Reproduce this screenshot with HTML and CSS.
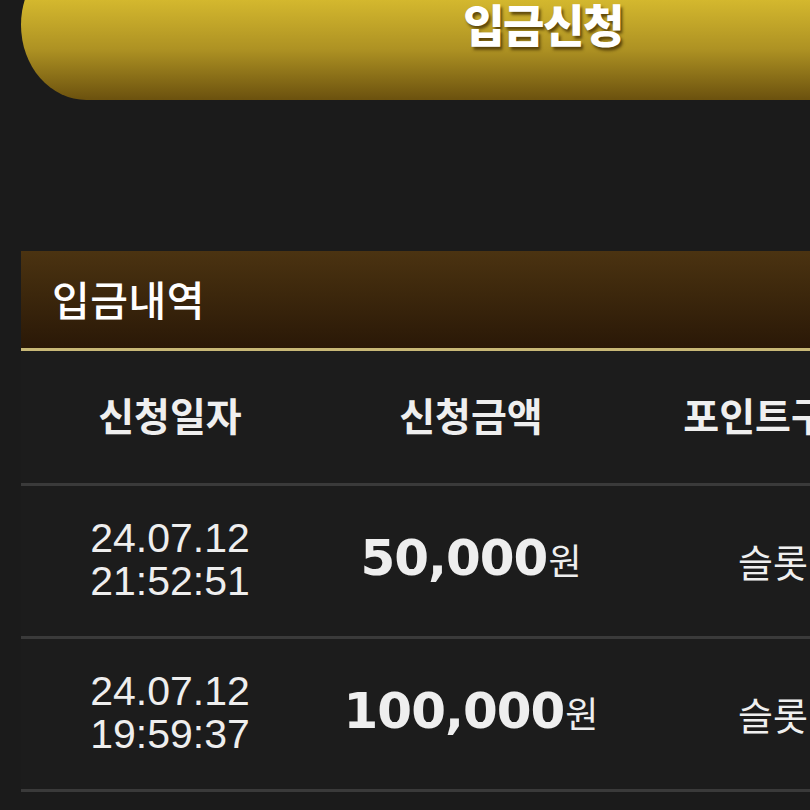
FILE: index.html
```html
<!DOCTYPE html>
<html lang="ko">
<head>
<meta charset="utf-8">
<title>입금신청</title>
<link rel="stylesheet" href="styles.css">
</head>
<body>
<div class="page">
  <button class="apply-btn" type="button">입금신청</button>

  <section class="history">
    <h2 class="history-title">입금내역</h2>
    <div class="table">
      <div class="row head">
        <div class="cell">신청일자</div>
        <div class="cell">신청금액</div>
        <div class="cell">포인트구분</div>
        <div class="cell">상태</div>
      </div>
      <div class="row">
        <div class="cell date"><span>24.07.12</span><span>21:52:51</span></div>
        <div class="cell amount"><span class="num">50,000</span><span class="won">원</span></div>
        <div class="cell kind">슬롯</div>
        <div class="cell kind">완료</div>
      </div>
      <div class="row">
        <div class="cell date"><span>24.07.12</span><span>19:59:37</span></div>
        <div class="cell amount"><span class="num">100,000</span><span class="won">원</span></div>
        <div class="cell kind">슬롯</div>
        <div class="cell kind">완료</div>
      </div>
    </div>
  </section>
</div>
</body>
</html>
```

FILE: styles.css
```css
html, body {
  margin: 0;
  padding: 0;
  background: #1b1b1b;
  overflow: hidden;
  height: 810px;
}

.page {
  padding-left: 21px;
  width: 1200px;
  font-family: "Noto Sans CJK KR", "Noto Sans", sans-serif;
  color: #efefef;
}

.apply-btn {
  display: flex;
  align-items: center;
  justify-content: center;
  margin-top: -50px;
  width: 1044px;
  height: 150px;
  border: 0;
  padding: 0 0 4px 0;
  border-radius: 68px 0 0 68px / 78px 0 0 78px;
  background: linear-gradient(180deg, #e6c936 0%, #d4b82e 33%, #ae9223 66%, #6b510e 100%);
  font-family: "Noto Sans CJK KR", sans-serif;
  font-weight: 900;
  font-size: 45px;
  letter-spacing: -1.5px;
  color: #ffffff;
  text-shadow: 2px 3px 3px rgba(60, 40, 0, 0.75);
}

.history {
  margin-top: 151px;
}

.history-title {
  margin: 0;
  height: 100px;
  display: flex;
  align-items: center;
  padding-left: 31px;
  padding-bottom: 4px;
  box-sizing: border-box;
  background: linear-gradient(180deg, #4b3311 0%, #3c270c 45%, #2a1807 100%);
  border-bottom: 3px solid #c8b877;
  font-size: 41px;
  font-weight: 500;
  letter-spacing: 0.5px;
  color: #ffffff;
}

.table {
  background: #1c1c1c;
}

.row {
  display: grid;
  grid-template-columns: 298px 304px 300px 298px;
  height: 150px;
  border-bottom: 3px solid #3a3a3a;
}

.row.head {
  height: 132px;
}

.cell {
  display: flex;
  align-items: center;
  justify-content: center;
}

.head .cell {
  font-size: 39px;
  font-weight: 700;
  letter-spacing: 0px;
  padding-bottom: 6px;
}

.date {
  flex-direction: column;
  font-family: "Liberation Sans", Arial, sans-serif;
  font-size: 41px;
  line-height: 43px;
  color: #eeeeee;
  padding-bottom: 2px;
}

.amount {
  align-items: baseline;
  align-content: center;
  flex-wrap: wrap;
  padding-bottom: 6px;
}

.num {
  font-family: "DejaVu Sans", sans-serif;
  font-weight: 700;
  font-size: 50px;
  letter-spacing: -1px;
  color: #eeeeee;
}

.won {
  font-size: 36px;
  margin-left: 1px;
  color: #eeeeee;
}

.kind {
  font-size: 38px;
  letter-spacing: 0px;
  padding-bottom: 2px;
}
```
